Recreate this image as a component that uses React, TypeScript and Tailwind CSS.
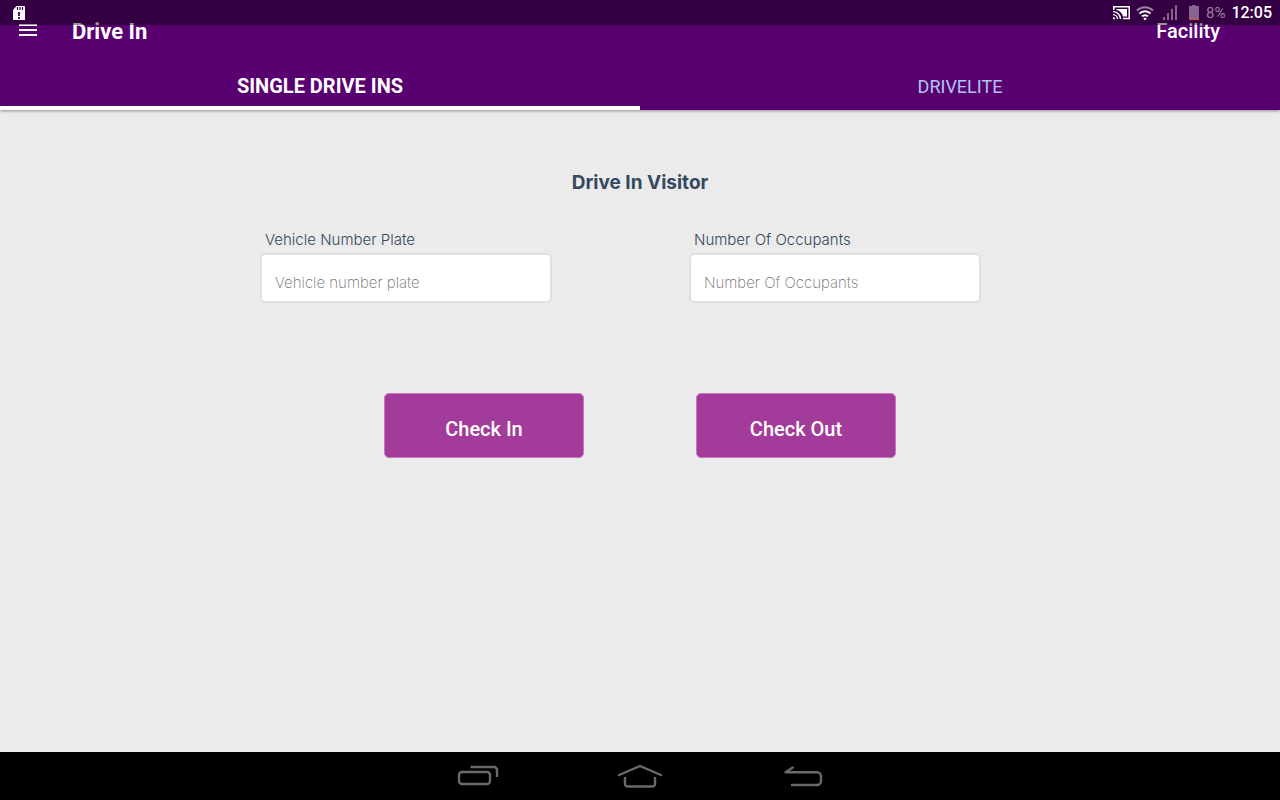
import { useState } from "react";
import type { FormEvent } from "react";

const fields = [
  { id: "plate", label: "Vehicle Number Plate", placeholder: "Vehicle number plate" },
  { id: "occupants", label: "Number Of Occupants", placeholder: "Number Of Occupants" },
];

const tabs = ["SINGLE DRIVE INS", "DRIVELITE"];

function StatusBar() {
  return (
    <div className="absolute inset-x-0 top-0 h-[25px] pt-px bg-black/40 flex items-center justify-between pl-3 pr-2 pointer-events-none">
      {/* SD card warning */}
      <svg width="14" height="15" viewBox="0 0 14 15">
        <path d="M4.5 0H12a1 1 0 0 1 1 1v13H2a1 1 0 0 1-1-1V4z" fill="#fff" />
        <path d="M5.5 1v3M8 1v3M10.5 1v3" stroke="#350043" strokeWidth="1.2" />
        <path d="M7 6v4M7 11v2" stroke="#350043" strokeWidth="1.8" />
      </svg>

      <div className="flex items-center">
        {/* Cast */}
        <svg width="17" height="14" viewBox="0 0 17 14" fill="none" stroke="#fff">
          <path d="M0.8 4V0.8h15.400v11.700H10" strokeWidth="1.500" />
          <path d="M3.500 3h10.500v7.500h-4C9 7 7 4.800 3.500 4z" fill="#fff" stroke="none" />
          <path d="M0 5.600a7.500 7.500 0 0 1 7.500 7.500M0 8.600a4.500 4.500 0 0 1 4.500 4.500" strokeWidth="1.400" />
          <path d="M0 11a2.200 2.200 0 0 1 2.200 2.200H0z" fill="#fff" stroke="none" />
        </svg>
        {/* Wifi */}
        <svg width="18" height="15" viewBox="0 0 18 15" fill="none" className="ml-[6px]">
          <path d="M1 4.500a11.500 11.500 0 0 1 16 0" stroke="#9a80a1" strokeWidth="2" />
          <path d="M3.500 7.500a7.800 7.800 0 0 1 11 0M6 10.400a4.200 4.200 0 0 1 6 0" stroke="#fff" strokeWidth="2" />
          <path d="M7.200 12.500a2.600 2.600 0 0 1 3.600 0L9 14.500z" fill="#fff" />
        </svg>
        {/* Signal */}
        <svg width="15" height="16" viewBox="0 0 15 16" fill="#86668e" className="ml-[8px]">
          <path d="M1 12h2v3H1zM5 8h2v7H5zM9 4h2v11H9zM13 0h2v15h-2z" />
        </svg>
        {/* Battery */}
        <svg width="10" height="16" viewBox="0 0 10 16" className="ml-[12px]">
          <path d="M3 0h4v1h3v13H0V1h3z" fill="#86668e" />
          <path d="M0 14h10v1H0z" fill="#e0502a" />
        </svg>
        <span className="ml-[7px] text-[15px] leading-5 text-[#9a80a1]">8%</span>
        <span className="ml-[6px] text-[16px] leading-5 font-medium text-white">12:05</span>
      </div>
    </div>
  );
}

function NavBar() {
  return (
    <nav className="h-12 bg-black flex items-center justify-center gap-[116px]">
      <button aria-label="Recent apps">
        <svg width="44" height="24" viewBox="0 0 44 24" fill="none" stroke="#6a6a6a" strokeWidth="2.4">
          <rect x="3" y="8" width="31" height="12" rx="3" />
          <path d="M14.5 3H38a3 3 0 0 1 3 3v7" />
        </svg>
      </button>
      <button aria-label="Home">
        <svg width="48" height="26" viewBox="0 0 48 26" fill="none" stroke="#6a6a6a" strokeWidth="2.4">
          <path d="M2 12.5L24 3l22 9.500" />
          <path d="M9 14v7a2.500 2.500 0 0 0 2.500 2.500h25A2.500 2.500 0 0 0 39 21v-7" />
        </svg>
      </button>
      <button aria-label="Back">
        <svg width="44" height="24" viewBox="0 0 44 24" fill="none" stroke="#6a6a6a" strokeWidth="2.4">
          <path d="M13.5 3L5.500 8.200H37a4 4 0 0 1 4 4V17a4 4 0 0 1-4 4H11" strokeLinejoin="round" />
        </svg>
      </button>
    </nav>
  );
}

export default function App() {
  const [activeTab, setActiveTab] = useState(0);
  const [values, setValues] = useState<Record<string, string>>({});

  const handleSubmit = (e: FormEvent) => {
    e.preventDefault();
    setValues({});
  };

  return (
    <div className="relative min-h-screen flex flex-col bg-[#ebebeb] font-['Roboto',sans-serif]">
      <header className="bg-[#590070] text-white shadow-[0_1px_3px_rgba(0,0,0,0.4)]">
        <div className="h-[62px] flex items-center justify-between pl-[19px] pr-[60px]">
          <div className="flex items-center gap-[35px]">
            <button aria-label="Open menu">
              <svg width="18" height="14" viewBox="0 0 18 14" fill="#fff">
                <path d="M0 0h18v2H0zM0 5h18v2H0zM0 10h18v2H0z" />
              </svg>
            </button>
            <h1 className="pt-px text-[22px] leading-6 font-bold">Drive In</h1>
          </div>
          <button className="text-[20px] leading-6 font-medium">Facility</button>
        </div>

        <div className="grid grid-cols-2" role="tablist">
          {tabs.map((tab, i) => (
            <button
              key={tab}
              role="tab"
              aria-selected={i === activeTab}
              onClick={() => setActiveTab(i)}
              className={
                i === activeTab
                  ? "h-12 pt-1 border-b-4 border-white text-[20px] font-bold"
                  : "h-12 pt-1 border-b-4 border-transparent text-[18px] text-[#b0c4f5]"
              }
            >
              {tab}
            </button>
          ))}
        </div>
      </header>

      <main className="flex-1 pt-[61px] text-[#34495e]">
        <form onSubmit={handleSubmit}>
          <h2 className="text-center font-['Inter',sans-serif] text-[19px] leading-6 font-bold">
            Drive In Visitor
          </h2>

          <div className="mt-[33px] pr-[39px] flex justify-center gap-[137px] font-['Inter',sans-serif]">
            {fields.map((field) => (
              <div key={field.id} className="w-[292px]">
                <label htmlFor={field.id} className="block pl-[5px] text-[15px] leading-6 font-light">
                  {field.label}
                </label>
                <input
                  id={field.id}
                  value={values[field.id] ?? ""}
                  onChange={(e) => setValues({ ...values, [field.id]: e.target.value })}
                  placeholder={field.placeholder}
                  className="mt-px w-full h-[50px] px-[13px] pt-[9px] rounded-[5px] border-2 border-[#e0e0e0] bg-white text-[15px] font-extralight placeholder:text-[#707070] focus:outline-none focus:border-[#a33b9a]"
                />
              </div>
            ))}
          </div>

          <div className="mt-[90px] flex justify-center gap-28">
            <button
              type="submit"
              className="w-[200px] h-[65px] pt-[7px] rounded-[5px] border border-[#c27abc] bg-[#a33b9a] text-white text-[20px] font-medium"
            >
              Check In
            </button>
            <button
              type="button"
              className="w-[200px] h-[65px] pt-[7px] rounded-[5px] border border-[#c27abc] bg-[#a33b9a] text-white text-[20px] font-medium"
            >
              Check Out
            </button>
          </div>
        </form>
      </main>

      <NavBar />
      <StatusBar />
    </div>
  );
}
